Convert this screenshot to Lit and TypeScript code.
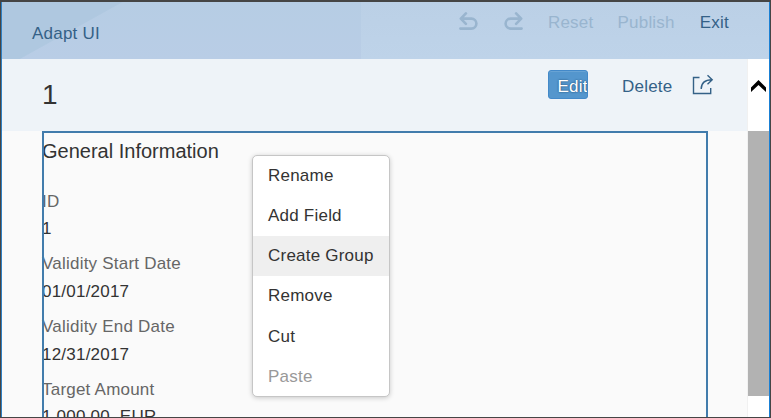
import { LitElement, html, css, svg } from "lit";
import { customElement } from "lit/decorators.js";
import { classMap } from "lit/directives/class-map.js";

const FIELDS = [
  { label: "ID", value: "1" },
  { label: "Validity Start Date", value: "01/01/2017" },
  { label: "Validity End Date", value: "12/31/2017" },
  { label: "Target Amount", value: "1,000.00\u00a0 EUR" },
];

const MENU = [
  { text: "Rename" },
  { text: "Add Field" },
  { text: "Create Group", active: true },
  { text: "Remove" },
  { text: "Cut" },
  { text: "Paste", disabled: true },
];

const undoPath = svg`<path d="M6.9 1.4 L1.8 6.6 L6.9 11.8 M2.5 6.6 H12.4 A5 5 0 0 1 12.4 16.6 H1.4" />`;

@customElement("app-root")
export class AppRoot extends LitElement {
  static styles = css`
    :host {
      display: block;
      width: 771px;
      height: 418px;
      overflow: hidden;
      position: relative;
      box-sizing: border-box;
      border: 1px solid #454545;
      border-top-width: 2px;
      background: #fafafa;
      font-family: "Liberation Sans", Arial, sans-serif;
      font-size: 17px;
      letter-spacing: 0.22px;
      color: #333;
    }
    .window {
      height: 415px;
      display: flex;
      flex-direction: column;
      box-sizing: border-box;
      border-left: 1px solid #2f80c3;
      border-right: 1px solid #1a80d4;
      overflow: hidden;
    }
    .shell {
      flex: none;
      height: 57px;
      display: flex;
      background:
        linear-gradient(151deg, #afc8e0 0 58px, transparent 59px) 0 0 / 359px 57px no-repeat,
        linear-gradient(#b6cde4, #b9cde6) 0 0 / 359px 57px no-repeat,
        linear-gradient(#bbd0e6, #bed3e9);
      color: #346187;
    }
    .brand {
      margin-left: 30px;
      line-height: 64px;
      flex: 1;
    }
    .tools {
      display: flex;
      line-height: 42px;
      margin-right: 40px;
    }
    .tools .off {
      color: #99b5cf;
    }
    .tool-icon {
      width: 20px;
      height: 20px;
      fill: none;
      stroke: #99b5cf;
      stroke-width: 2.6;
      stroke-linecap: round;
      stroke-linejoin: round;
      margin: 10px 24px 0 0;
    }
    .redo {
      transform: scaleX(-1);
      margin-right: 25px;
    }
    .reset {
      margin-right: 24px;
    }
    .publish {
      margin-right: 25px;
    }
    .main {
      flex: 1;
      min-height: 0;
      display: flex;
    }
    .page {
      flex: 1;
      min-width: 0;
    }
    .title {
      height: 72px;
      display: flex;
      box-sizing: border-box;
      background: #eef3f8;
      color: #346187;
    }
    .name {
      flex: 1;
      padding-left: 40px;
      font-size: 28px;
      line-height: 71px;
      color: #333;
    }
    .edit {
      box-sizing: border-box;
      width: 40px;
      height: 29px;
      margin: 11px 34.5px 0 0;
      padding-left: 9px;
      border: 1px solid #4389c9;
      border-radius: 3px;
      background: #5496cd;
      box-shadow: inset 0 1px #68a3d4;
      color: #fff;
      line-height: 31px;
      overflow: hidden;
      text-shadow: 0 0 2px #123a60;
    }
    .delete {
      line-height: 56px;
      margin-right: 19.5px;
    }
    .share {
      width: 22px;
      height: 22px;
      margin: 15px 34px 0 0;
      fill: none;
      stroke: #346187;
      stroke-width: 1.4;
    }
    .section {
      position: relative;
      margin-left: 40px;
      width: 666px;
      height: 300px;
    }
    .outline {
      position: absolute;
      inset: 0;
      border: 2px solid #427cac;
    }
    .heading {
      margin: 0;
      font-size: 20px;
      font-weight: 400;
      letter-spacing: 0;
      line-height: 40px;
      height: 56.6px;
    }
    .field {
      height: 62.7px;
      line-height: 28px;
    }
    .label {
      height: 27.8px;
      color: #666;
    }
    .scroll {
      width: 21px;
      background: #fff;
      display: flex;
      flex-direction: column;
      box-shadow: -1px 0 #f1f1f1;
    }
    .arrow {
      width: 21px;
      height: 72px;
      fill: #000;
    }
    .thumb {
      height: 265px;
      background: #b2b2b2;
    }
    .menu {
      position: absolute;
      left: 251px;
      top: 153px;
      width: 138px;
      height: 242px;
      box-sizing: border-box;
      border: 1px solid #c6c6c6;
      border-radius: 5px;
      background: #fff;
      box-shadow: 0 1px 5px rgba(0, 0, 0, 0.2);
      overflow: hidden;
    }
    .item {
      height: 40.15px;
      line-height: 40.2px;
      padding-left: 15px;
    }
    .item.active {
      background: #efefef;
    }
    .item.disabled {
      color: #999;
    }
  `;

  render() {
    return html`
      <div class="window">
        <header class="shell">
          <div class="brand">Adapt UI</div>
          <div class="tools">
            <svg class="tool-icon" viewBox="0 0 20 20">${undoPath}</svg>
            <svg class="tool-icon redo" viewBox="0 0 20 20">${undoPath}</svg>
            <span class="off reset">Reset</span>
            <span class="off publish">Publish</span>
            <span>Exit</span>
          </div>
        </header>
        <div class="main">
          <div class="page">
            <div class="title">
              <div class="name">1</div>
              <div class="edit">Edit</div>
              <div class="delete">Delete</div>
              <svg class="share" viewBox="0 0 22 22">
                <path d="M7.5 3.5 H1.5 V19.5 H18.7 V14" />
                <path d="M9.2 15 C9.2 9 13 5.7 20 5.7 M15.5 1.2 L20.2 5.7 L15.5 10.2" />
              </svg>
            </div>
            <section class="section">
              <h2 class="heading">General Information</h2>
              ${FIELDS.map(
                (f) => html`<div class="field"><div class="label">${f.label}</div><div>${f.value}</div></div>`
              )}
              <div class="outline"></div>
            </section>
          </div>
          <div class="scroll">
            <svg class="arrow" viewBox="0 0 21 72">
              <path d="M10.5 21 L18 28.5 V33 L10.5 26 L3 33 V28.5 Z" />
            </svg>
            <div class="thumb"></div>
          </div>
        </div>
      </div>
      <div class="menu">
        ${MENU.map(
          (m) => html`<div class=${classMap({ item: true, active: !!m.active, disabled: !!m.disabled })}>${m.text}</div>`
        )}
      </div>
    `;
  }
}
